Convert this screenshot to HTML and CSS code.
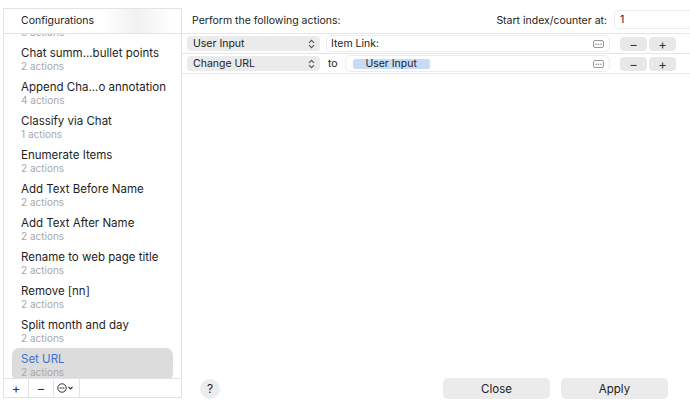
FILE: index.html
```html
<!DOCTYPE html>
<html lang="en">

<head>
    <meta charset="UTF-8">
    <meta name="viewport" content="width=device-width, initial-scale=1.0">
    <title>Configurations</title>
    <link rel="stylesheet" href="styles.css">
</head>

<body>
    <div class="window">
        <aside class="sidebar">
            <div class="side-head">Configurations</div>
            <div class="side-list">
                <ul class="configs">
                    <li class="partial"><span class="count">8 actions</span></li>
                    <li><span class="name">Chat summ...bullet points</span><span class="count">2 actions</span></li>
                    <li><span class="name">Append Cha...o annotation</span><span class="count">4 actions</span></li>
                    <li><span class="name">Classify via Chat</span><span class="count">1 actions</span></li>
                    <li><span class="name">Enumerate Items</span><span class="count">2 actions</span></li>
                    <li><span class="name">Add Text Before Name</span><span class="count">2 actions</span></li>
                    <li><span class="name">Add Text After Name</span><span class="count">2 actions</span></li>
                    <li><span class="name">Rename to web page title</span><span class="count">2 actions</span></li>
                    <li><span class="name">Remove [nn]</span><span class="count">2 actions</span></li>
                    <li><span class="name">Split month and day</span><span class="count">2 actions</span></li>
                    <li class="selected"><span class="name">Set URL</span><span class="count">2 actions</span></li>
                </ul>
            </div>
            <div class="side-foot">
                <button type="button" class="foot-btn">+</button>
                <button type="button" class="foot-btn">−</button>
                <button type="button" class="foot-btn more">
                    <svg width="20" height="10" viewBox="0 0 20 10">
                        <circle cx="5" cy="5" r="4.2" fill="none" stroke="#333" stroke-width="1"/>
                        <circle cx="3.2" cy="5" r="0.7" fill="#333"/>
                        <circle cx="5" cy="5" r="0.7" fill="#333"/>
                        <circle cx="6.8" cy="5" r="0.7" fill="#333"/>
                        <path d="M11.5 4 L13.5 6 L15.5 4" fill="none" stroke="#333" stroke-width="1.2"/>
                    </svg>
                </button>
            </div>
        </aside>

        <main class="editor">
            <div class="editor-head">
                <span class="head-title">Perform the following actions:</span>
                <label for="counter" class="counter-label">Start index/counter at:</label>
                <input type="text" id="counter" class="counter" value="1">
            </div>

            <div class="actions">
                <div class="action-row">
                    <div class="popup">User Input
                        <svg class="updown" width="7" height="10" viewBox="0 0 7 10">
                            <path d="M1 3.8 L3.5 1.3 L6 3.8 M1 6.2 L3.5 8.7 L6 6.2" fill="none" stroke="#555" stroke-width="1.1"/>
                        </svg>
                    </div>
                    <div class="field">
                        <span class="field-text">Item Link:</span>
                        <svg class="dots" width="11" height="8" viewBox="0 0 11 8">
                            <rect x="0.5" y="0.5" width="10" height="7" rx="1.5" fill="none" stroke="#999"/>
                            <circle cx="3" cy="4.3" r="0.7" fill="#777"/>
                            <circle cx="5.5" cy="4.3" r="0.7" fill="#777"/>
                            <circle cx="8" cy="4.3" r="0.7" fill="#777"/>
                        </svg>
                    </div>
                    <button type="button" class="step">−</button>
                    <button type="button" class="step">+</button>
                </div>
                <div class="action-row">
                    <div class="popup">Change URL
                        <svg class="updown" width="7" height="10" viewBox="0 0 7 10">
                            <path d="M1 3.8 L3.5 1.3 L6 3.8 M1 6.2 L3.5 8.7 L6 6.2" fill="none" stroke="#555" stroke-width="1.1"/>
                        </svg>
                    </div>
                    <span class="to">to</span>
                    <div class="field">
                        <span class="token">User Input</span>
                        <svg class="dots" width="11" height="8" viewBox="0 0 11 8">
                            <rect x="0.5" y="0.5" width="10" height="7" rx="1.5" fill="none" stroke="#999"/>
                            <circle cx="3" cy="4.3" r="0.7" fill="#777"/>
                            <circle cx="5.5" cy="4.3" r="0.7" fill="#777"/>
                            <circle cx="8" cy="4.3" r="0.7" fill="#777"/>
                        </svg>
                    </div>
                    <button type="button" class="step">−</button>
                    <button type="button" class="step">+</button>
                </div>
            </div>

            <div class="editor-foot">
                <button type="button" class="help">?</button>
                <button type="button" class="push close">Close</button>
                <button type="button" class="push">Apply</button>
            </div>
        </main>
    </div>
</body>

</html>
```

FILE: styles.css
```css
body {
    font-family: Inter, "Noto Sans", sans-serif;
    background-color: #fff;
    color: #222;
    margin: 0;
    padding: 0;
}

.window {
    display: flex;
    width: 690px;
    height: 411px;
    overflow: hidden;
}

/* left list of configurations */
.sidebar {
    width: 179px;
    margin: 8px 0 13px 3px;
    border: 1px solid #e3e3e3;
    box-sizing: border-box;
    display: flex;
    flex-direction: column;
    flex-shrink: 0;
    background-color: #fff;
}

.side-head {
    height: 24px;
    line-height: 24px;
    padding-left: 17px;
    font-size: 10.5px;
    border-bottom: 1px solid #e3e3e3;
    background: linear-gradient(90deg, #fff 55%, #f1f1f1 75%, #fff 95%);
}

.side-list {
    flex: 1;
    overflow: hidden;
}

.configs {
    list-style: none;
    margin: -26px 0 0 0;
    padding: 0;
}

.configs li {
    height: 34px;
    margin: 0 8px;
    padding: 4px 0 0 9px;
    box-sizing: border-box;
    display: flex;
    flex-direction: column;
    border-radius: 7px;
}

/* item scrolled up under the header, only its count peeks out */
.configs li.partial {
    padding-top: 18px;
}

.configs .name {
    font-size: 11.5px;
    line-height: 14px;
    color: #1e1e1e;
}

.configs .count {
    font-size: 10px;
    line-height: 12px;
    color: #a9a9a9;
}

.configs li.selected {
    background-color: #dcdcdc;
    height: 33px;
}

.configs li.selected .name {
    color: #3a73d6;
}

.side-foot {
    height: 18px;
    border-top: 1px solid #e3e3e3;
    display: flex;
    background-color: #fff;
}

.foot-btn {
    width: 25px;
    height: 18px;
    padding: 0;
    border: 0;
    border-right: 1px solid #e3e3e3;
    background: transparent;
    font-family: Inter, sans-serif;
    font-size: 13px;
    line-height: 18px;
    color: #333;
}

.foot-btn.more {
    width: 26px;
    display: flex;
    align-items: center;
    justify-content: center;
}

/* right editor */
.editor {
    flex: 1;
    display: flex;
    flex-direction: column;
    overflow: hidden;
}

.editor-head {
    height: 25px;
    margin-top: 8px;
    border-bottom: 1px solid #e6e6e6;
    display: flex;
    align-items: center;
    padding-left: 10px;
    font-size: 10.5px;
}

.head-title {
    flex: 1;
}

.counter-label {
    margin-right: 7px;
}

.counter {
    width: 88px;
    height: 19px;
    margin-right: -12px;
    margin-top: -2px;
    border: 1px solid #ececec;
    border-radius: 4px;
    box-sizing: border-box;
    padding: 0 5px;
    font-family: Inter, sans-serif;
    font-size: 10.5px;
    color: #222;
    outline: none;
}

.action-row {
    height: 19px;
    border-bottom: 1px solid #e6e6e6;
    display: flex;
    align-items: center;
    padding: 0 14px 0 5px;
    font-size: 10.5px;
}

.popup {
    width: 133px;
    height: 15px;
    border-radius: 4px;
    background-color: #ebebeb;
    box-sizing: border-box;
    padding: 0 5px 0 6px;
    display: flex;
    align-items: center;
    justify-content: space-between;
    margin-right: 6px;
    flex-shrink: 0;
}

.updown {
    display: block;
}

.to {
    margin: 0 7px 0 2px;
}

.field {
    flex: 1;
    height: 17px;
    border: 1px solid #ececec;
    border-radius: 6px;
    box-sizing: border-box;
    display: flex;
    align-items: center;
    padding: 0 5px 0 4px;
    margin-right: 8px;
}

.field-text {
    flex: 1;
}

.token {
    width: 77px;
    height: 10px;
    margin-left: 3px;
    background-color: #c5dbf7;
    border-radius: 2px;
    text-align: center;
    line-height: 10px;
    font-size: 10.5px;
}

.dots {
    margin-left: auto;
    display: block;
}

.step {
    width: 27px;
    height: 14px;
    margin-left: 2px;
    padding: 0;
    border: 0;
    border-radius: 4px;
    background-color: #e8e8e8;
    font-family: Inter, sans-serif;
    font-size: 13px;
    line-height: 14px;
    color: #333;
}

.editor-foot {
    margin-top: auto;
    margin-bottom: 12px;
    display: flex;
    align-items: center;
    padding: 0 22px 0 18px;
}

.help {
    width: 20px;
    height: 20px;
    border-radius: 50%;
    border: 0;
    padding: 0;
    background-color: #ececec;
    font-family: Inter, sans-serif;
    font-size: 12px;
    color: #222;
    margin-right: auto;
}

.push {
    width: 107px;
    height: 21px;
    border: 0;
    border-radius: 5px;
    background-color: #ebebeb;
    font-family: Inter, sans-serif;
    font-size: 11.5px;
    color: #222;
    padding: 0;
}

.push.close {
    margin-right: 11px;
}
```
